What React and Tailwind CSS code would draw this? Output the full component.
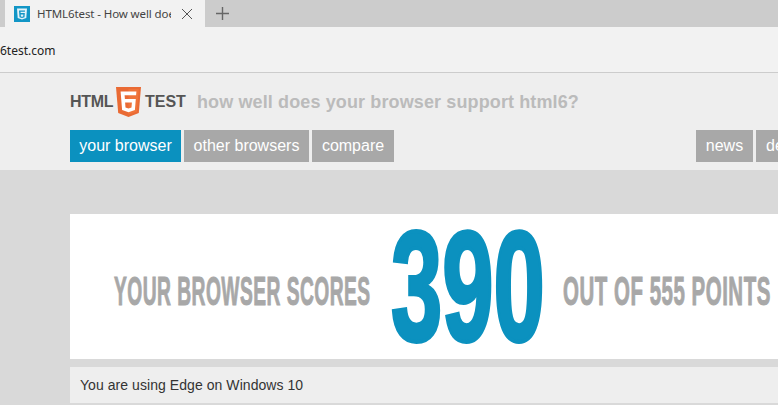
const sans = "font-['Liberation_Sans',Arial,sans-serif]";

function Shield({ className }) {
  return (
    <svg viewBox="0 0 25 30" className={className}>
      <path d="M0 0H25L22.8 26L12.5 30L2.2 26Z" fill="#E96A34" />
      <path d="M12.5 2V27.6L20.9 24.8L22.8 2Z" fill="#F0743A" />
      <path fillRule="evenodd" d="M4.6 4.5H20.4L20.1 8.3H8.6L8.9 12H19.8L18.9 23L12.5 25.2L6.1 23ZM9.1 15.4L9.5 20.6L12.5 21.6L15.5 20.6L15.9 15.4Z" fill="#fff" />
    </svg>
  );
}

function Favicon() {
  return (
    <svg viewBox="0 0 16 16" className="w-4 h-4 shrink-0">
      <rect width="16" height="16" fill="#1296C6" />
      <path d="M3 2.5H13L12.3 12L8 13.5L3.7 12Z" fill="#e4f3f9" />
      <path fillRule="evenodd" d="M11 4.4H5L5.5 11.3L8 12.1L10.5 11.3L10.8 7.1H6.6L6.5 5.7H10.9ZM6.7 8.4H9.4L9.2 10.4L8 10.8L6.9 10.4Z" fill="#1296C6" />
    </svg>
  );
}

function NavButton({ children, className }) {
  return (
    <div className={`h-8 shrink-0 flex items-center justify-center text-[16px] text-white ${className}`}>{children}</div>
  );
}

export default function App() {
  return (
    <div className={`w-[778px] h-[405px] overflow-hidden bg-[#d9d9d9] ${sans}`}>
      <div className="h-[27px] bg-[#cccccc] flex">
        <div className="w-[5px]" />
        <div className="w-[200px] bg-[#f2f2f2] flex items-center pl-[9px] font-['Noto_Sans',sans-serif]">
          <Favicon />
          <span className="ml-[7px] w-[134px] overflow-hidden whitespace-nowrap text-[11.5px] tracking-[-0.1px] text-[#444]">HTML6test - How well does</span>
          <svg viewBox="0 0 12 12" className="w-3 h-3 ml-[10px] shrink-0" stroke="#555" strokeWidth="1" fill="none">
            <path d="M1 1L11 11M11 1L1 11" />
          </svg>
        </div>
        <div className="w-[35px] flex items-center justify-center">
          <svg viewBox="0 0 13 13" className="w-[13px] h-[13px]" stroke="#666" strokeWidth="1.4" fill="none">
            <path d="M6.5 0V13M0 6.5H13" />
          </svg>
        </div>
      </div>
      <div className="h-[46px] bg-[#f2f2f2] border-b border-[#cccccc] flex items-center">
        <span className="pt-[2px] text-[12px] text-[#222] font-['Noto_Sans',sans-serif]">6test.com</span>
      </div>
      <div className="h-[97px] bg-[#eeeeee] pl-[70px] pt-[14px]">
        <div className="h-[30px] flex items-center">
          <span className="w-[46px] text-[16px] font-bold text-[#555] tracking-[-0.3px]">HTML</span>
          <Shield className="w-[25px] h-[30px] shrink-0" />
          <span className="ml-[4px] w-[48px] text-[16px] font-bold text-[#555]">TEST</span>
          <span className="ml-[4px] text-[18px] font-bold text-[#bbbbbb] whitespace-nowrap tracking-[0.12px]">how well does your browser support html6?</span>
        </div>
        <div className="mt-[13px] flex">
          <NavButton className="w-[111px] bg-[#0b91bf]">your browser</NavButton>
          <NavButton className="ml-[3px] w-[125px] bg-[#a8a8a8]">other browsers</NavButton>
          <NavButton className="ml-[3px] w-[82px] bg-[#a8a8a8]">compare</NavButton>
          <NavButton className="ml-[302px] w-[57px] bg-[#a8a8a8]">news</NavButton>
          <NavButton className="ml-[3px] w-[60px] bg-[#a8a8a8] !justify-start pl-[10px]">device</NavButton>
        </div>
      </div>
      <div className="pl-[70px] pt-[44px]">
        <div className="h-[145px] bg-white flex items-center whitespace-nowrap font-bold">
          <div className="ml-[44px] w-[277px] shrink-0 pt-[8px] text-[40px] tracking-[1px] text-[#a8a8a8] origin-left scale-x-[0.48] [-webkit-text-stroke:1px_#a8a8a8]">YOUR BROWSER SCORES</div>
          <div className="w-[172px] shrink-0 text-[155px] leading-none text-[#0b91bf] origin-left scale-x-[0.595] [-webkit-text-stroke:4px_#0b91bf]">390</div>
          <div className="w-[215px] shrink-0 pt-[8px] text-[40px] tracking-[1px] text-[#a8a8a8] origin-left scale-x-[0.512] [-webkit-text-stroke:1px_#a8a8a8]">OUT OF 555 POINTS</div>
        </div>
        <div className="mt-[8px] h-[36px] bg-[#eeeeee] flex items-center pl-[10px] text-[14px] text-[#333] tracking-[0.06px]">You are using Edge on Windows 10</div>
      </div>
    </div>
  );
}
